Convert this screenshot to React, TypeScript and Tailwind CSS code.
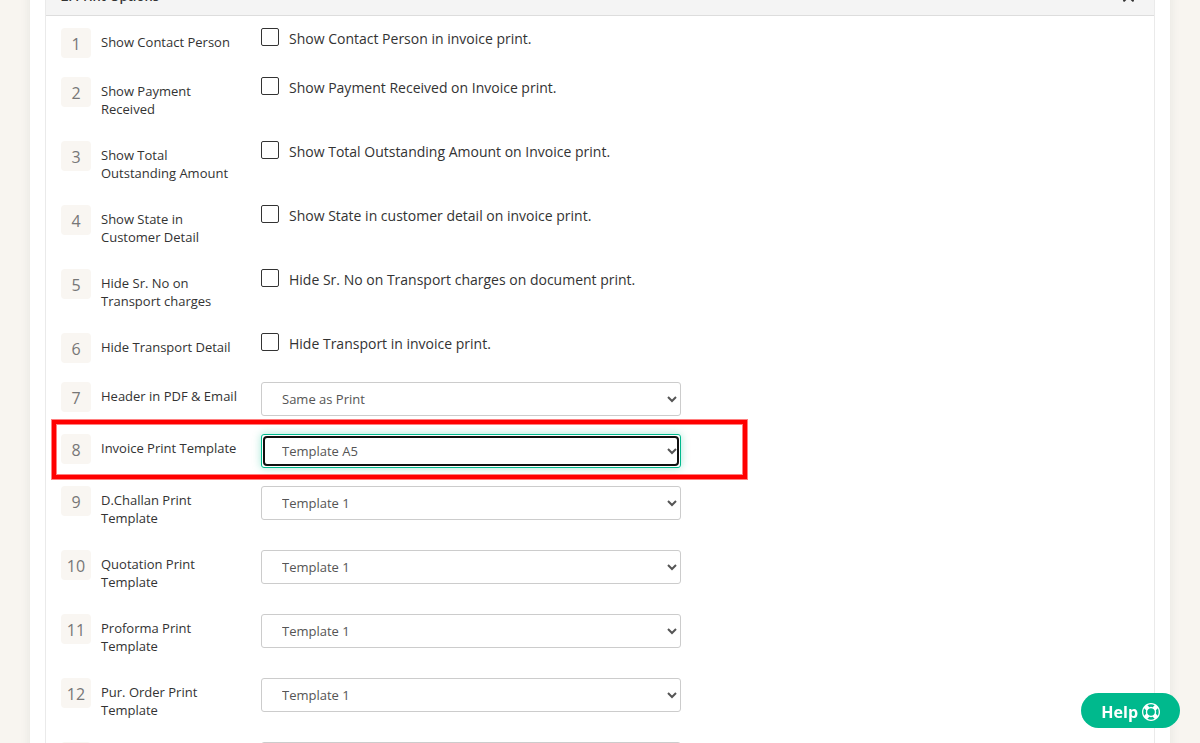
import React from 'react';
import { FaChevronUp } from 'react-icons/fa';

type Option = {
  label: string;
  check?: string;
  choices?: string[];
  active?: boolean;
};

const templates = ['Template 1', 'Template 2', 'Template 3'];

const options: Option[] = [
  { label: 'Show Contact Person', check: 'Show Contact Person in invoice print.' },
  { label: 'Show Payment Received', check: 'Show Payment Received on Invoice print.' },
  { label: 'Show Total Outstanding Amount', check: 'Show Total Outstanding Amount on Invoice print.' },
  { label: 'Show State in Customer Detail', check: 'Show State in customer detail on invoice print.' },
  { label: 'Hide Sr. No on Transport charges', check: 'Hide Sr. No on Transport charges on document print.' },
  { label: 'Hide Transport Detail', check: 'Hide Transport in invoice print.' },
  { label: 'Header in PDF & Email', choices: ['Same as Print'] },
  { label: 'Invoice Print Template', choices: ['Template A5', 'Template 1'], active: true },
  { label: 'D.Challan Print Template', choices: templates },
  { label: 'Quotation Print Template', choices: templates },
  { label: 'Proforma Print Template', choices: templates },
  { label: 'Pur. Order Print Template', choices: templates },
  { label: '', choices: [''] },
];

const selectBase = 'h-[34px] w-full rounded-[3px] border bg-white px-4 text-[13px] text-[#555]';
const selectActive = 'border-[#00b98d] shadow-[0_0_8px_rgba(0,185,141,0.35)]';

const LifeRing: React.FC = () => (
  <svg viewBox="0 0 1792 1792" className="h-[18px] w-[18px]" fill="currentColor" aria-hidden="true">
    <path d="M896 0q182 0 348 71t286 191 191 286 71 348-71 348-191 286-286 191-348 71-348-71-286-191-191-286-71-348 71-348 191-286 286-191 348-71zm0 128q-190 0-361 90l194 194q82-28 167-28t167 28l194-194q-171-90-361-90zm-678 1129l194-194q-28-82-28-167t28-167l-194-194q-90 171-90 361t90 361zm678 407q190 0 361-90l-194-194q-82 28-167 28t-167-28l-194 194q171 90 361 90zm0-384q159 0 271.5-112.5t112.5-271.5-112.5-271.5-271.5-112.5-271.5 112.5-112.5 271.5 112.5 271.5 271.5 112.5zm484-217l194 194q90-171 90-361t-90-361l-194 194q28 82 28 167t-28 167z" />
  </svg>
);

const OptionRow: React.FC<{ option: Option; index: number }> = ({ option, index }) => {
  const id = `option-${index}`;

  return (
    <div className="relative mb-[18px] flex min-h-[31px] items-start">
      <span className="mr-[10px] flex h-[30px] w-[30px] shrink-0 items-center justify-center rounded-[4px] bg-[#f9f6f2] pt-[2px] text-[16px] text-[#777]">
        {index}
      </span>
      <label htmlFor={id} className="mr-5 w-[140px] shrink-0 py-[5px] text-[13px] leading-[18px] text-[#333]">
        {option.label}
      </label>

      {option.check && (
        <div className="flex items-start gap-[10px]">
          <input
            id={id}
            type="checkbox"
            className="h-[18px] w-[18px] appearance-none rounded-[2px] border border-[#333] bg-white checked:bg-[#00b98d]"
          />
          <label htmlFor={id} className="text-[14px] leading-[22px] text-[#333]">
            {option.check}
          </label>
        </div>
      )}

      {option.choices && (
        <div className="relative w-full max-w-[420px]">
          <select id={id} className={`${selectBase} ${option.active ? selectActive : 'border-[#ccc]'}`}>
            {option.choices.map((choice) => (
              <option key={choice}>{choice}</option>
            ))}
          </select>
          {/* Focus ring inside the border */}
          {option.active && (
            <div className="pointer-events-none absolute inset-[2px] rounded-[4px] border-2 border-[#101010]"></div>
          )}
        </div>
      )}

      {/* Highlight frame around the chosen template */}
      {option.active && (
        <div className="pointer-events-none absolute -top-[14px] -left-[9px] h-[59px] w-[695px] border-4 border-[#ff0000] shadow-[0_0_0_1px_rgba(255,0,0,0.5),inset_0_0_0_1px_rgba(255,0,0,0.5)]"></div>
      )}
    </div>
  );
};

const App: React.FC = () => {
  return (
    <div className="h-screen overflow-hidden bg-[#f8f5f0] px-[30px] font-['Open_Sans',sans-serif]">
      <main className="min-h-full bg-white px-[15px] shadow-[0_0_8px_2px_rgba(60,80,80,0.07)]">
        <section className="border-x border-[#eaeaea]">
          {/* Panel heading, scrolled partly out of view */}
          <header className="-mt-[22px] flex h-[38px] items-center justify-between border-b border-[#ddd] bg-[#f4f4f4] px-[15px] text-[#333]">
            <h2 className="text-[13px] font-semibold">2. Print Options</h2>
            <button type="button" aria-label="Collapse" className="mr-1 pt-1 text-[13px]">
              <FaChevronUp />
            </button>
          </header>
          <div className="px-[15px] pt-3">
            {options.map((option, i) => (
              <OptionRow key={i} option={option} index={i + 1} />
            ))}
          </div>
        </section>
      </main>

      <button
        type="button"
        className="fixed right-5 bottom-[15px] flex h-[35px] items-center gap-1 rounded-full bg-[#00b98d] px-5 pt-[2px] text-[16px] font-bold text-white"
      >
        Help
        <LifeRing />
      </button>
    </div>
  );
};

export default App;
